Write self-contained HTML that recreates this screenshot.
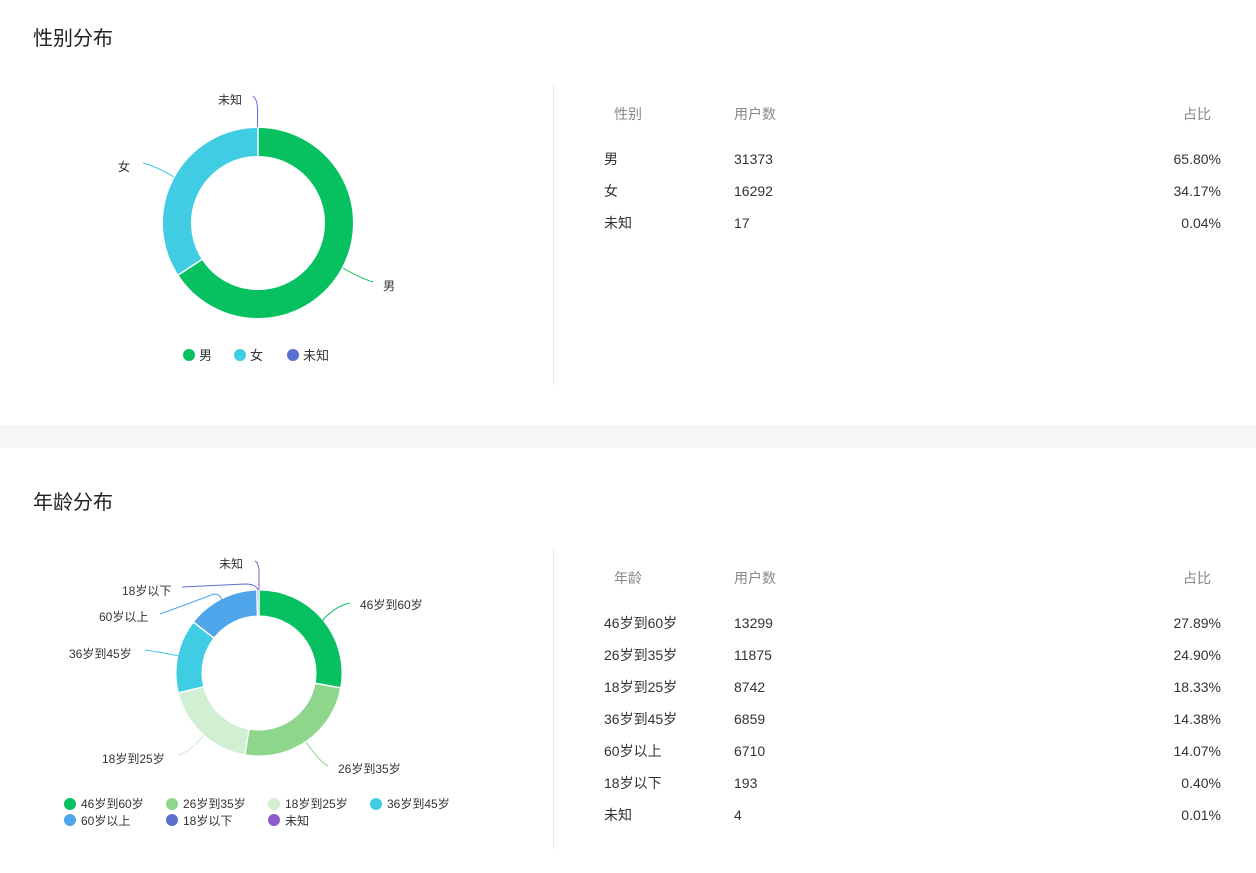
<!DOCTYPE html>
<html><head><meta charset="utf-8"><style>
body{margin:0;width:1256px;height:873px;background:#fff;font-family:"Liberation Sans","Noto Sans CJK SC",sans-serif;color:#333;position:relative;overflow:hidden}
.a{position:absolute;white-space:nowrap}
.t{font-size:20px;color:#222}
.h{font-size:14px;color:#888;line-height:20px}
.r{font-size:14px;color:#333;line-height:20px}
.rt{text-align:right;width:100px}
.vl{position:absolute;width:1px;background:#e8e8e8;left:553px}
</style></head><body>
<div class="a t" style="left:33px;top:22px">性别分布</div>
<div class="vl" style="top:85px;height:300px"></div>
<div style="position:absolute;left:0;top:425px;width:1256px;height:23px;background:#f5f6f7"></div>
<div class="a t" style="left:33px;top:486px">年龄分布</div>
<div class="vl" style="top:549px;height:300px"></div>

<svg class="a" style="left:0;top:0" width="553" height="873">
<g fill="none" stroke-width="28">
<path d="M258 142 A81 81 0 1 1 190.12 267.23" stroke="#07c160"/>
<path d="M190.12 267.23 A81 81 0 0 1 257.94 142" stroke="#40cde3"/>
</g>
<g stroke="#fff" stroke-width="1.5"><line x1="258" y1="156" x2="258" y2="127"/><line x1="202.7" y1="259" x2="177.6" y2="275.4"/></g>
<path d="M343 268 Q360 278 373 282" stroke="#07c160" fill="none"/>
<path d="M174 177 Q160 168 143 163" stroke="#40cde3" fill="none"/>
<path d="M257.5 127 L257.5 108 Q257 99 253 96" stroke="#5b6fd0" fill="none"/>
<text x="383" y="290" font-size="12" fill="#333">男</text>
<text x="118" y="171" font-size="12" fill="#333">女</text>
<text x="218" y="104" font-size="12" fill="#333">未知</text>
<circle cx="189" cy="355" r="6" fill="#07c160"/><text x="199" y="360" font-size="13" fill="#333">男</text>
<circle cx="240" cy="355" r="6" fill="#40cde3"/><text x="250" y="360" font-size="13" fill="#333">女</text>
<circle cx="293" cy="355" r="6" fill="#5b6fd0"/><text x="303" y="360" font-size="13" fill="#333">未知</text>

<g fill="none" stroke-width="25">
<path d="M259 603 A70 70 0 0 1 327.85 685.64" stroke="#07c160"/>
<path d="M327.85 685.64 A70 70 0 0 1 246.85 741.94" stroke="#8dd68c"/>
<path d="M246.85 741.94 A70 70 0 0 1 191.08 689.93" stroke="#d1efd3"/>
<path d="M191.08 689.93 A70 70 0 0 1 203.69 630.10" stroke="#40cde3"/>
<path d="M203.69 630.10 A70 70 0 0 1 257.11 603.03" stroke="#4ea5ea"/>
<path d="M257.11 603.03 A70 70 0 0 1 258.88 603" stroke="#5f6fcf"/>
</g>
<g stroke="#fff" stroke-width="1.5">
<line x1="259" y1="616" x2="259" y2="589"/>
<line x1="315.1" y1="683.3" x2="341.6" y2="688"/>
<line x1="249.1" y1="729.1" x2="244.6" y2="756"/>
<line x1="203.7" y1="686.8" x2="177.5" y2="693.1"/>
<line x1="214" y1="638.1" x2="193.4" y2="622.1"/>
<line x1="257.5" y1="616" x2="256.8" y2="589"/>
</g>
<path d="M322 621 Q335 606 350 603" stroke="#07c160" fill="none"/>
<path d="M306 742 Q320 762 328 766" stroke="#8dd68c" fill="none"/>
<path d="M204 735 Q190 752 178 755" stroke="#d1efd3" fill="none"/>
<path d="M179 656 Q160 652 145 650" stroke="#40cde3" fill="none"/>
<path d="M222 600 Q220 594 214 594 Q185 605 160 614" stroke="#4ea5ea" fill="none"/>
<path d="M258 590 Q256 584 245 584 L182 587" stroke="#5f6fcf" fill="none"/>
<path d="M259 590 L259 570 Q258 562 255 561" stroke="#8e5bd1" fill="none"/>
<text x="360" y="609" font-size="12" fill="#333">46岁到60岁</text>
<text x="338" y="773" font-size="12" fill="#333">26岁到35岁</text>
<text x="102" y="763" font-size="12" fill="#333">18岁到25岁</text>
<text x="69" y="658" font-size="12" fill="#333">36岁到45岁</text>
<text x="99" y="621" font-size="12" fill="#333">60岁以上</text>
<text x="122" y="595" font-size="12" fill="#333">18岁以下</text>
<text x="219" y="568" font-size="12" fill="#333">未知</text>
<g font-size="12" fill="#333">
<circle cx="70" cy="804" r="6" fill="#07c160"/><text x="81" y="808">46岁到60岁</text>
<circle cx="172" cy="804" r="6" fill="#8dd68c"/><text x="183" y="808">26岁到35岁</text>
<circle cx="274" cy="804" r="6" fill="#d1efd3"/><text x="285" y="808">18岁到25岁</text>
<circle cx="376" cy="804" r="6" fill="#40cde3"/><text x="387" y="808">36岁到45岁</text>
<circle cx="70" cy="820" r="6" fill="#4ea5ea"/><text x="81" y="825">60岁以上</text>
<circle cx="172" cy="820" r="6" fill="#5f6fcf"/><text x="183" y="825">18岁以下</text>
<circle cx="274" cy="820" r="6" fill="#8e5bd1"/><text x="285" y="825">未知</text>
</g>
</svg>

<div class="a h" style="left:614px;top:104px">性别</div>
<div class="a h" style="left:734px;top:104px">用户数</div>
<div class="a h rt" style="left:1111px;top:104px">占比</div>
<div class="a r" style="left:604px;top:149px">男</div><div class="a r" style="left:734px;top:149px">31373</div><div class="a r rt" style="left:1121px;top:149px">65.80%</div>
<div class="a r" style="left:604px;top:181px">女</div><div class="a r" style="left:734px;top:181px">16292</div><div class="a r rt" style="left:1121px;top:181px">34.17%</div>
<div class="a r" style="left:604px;top:213px">未知</div><div class="a r" style="left:734px;top:213px">17</div><div class="a r rt" style="left:1121px;top:213px">0.04%</div>

<div class="a h" style="left:614px;top:568px">年龄</div>
<div class="a h" style="left:734px;top:568px">用户数</div>
<div class="a h rt" style="left:1111px;top:568px">占比</div>
<div class="a r" style="left:604px;top:613px">46岁到60岁</div><div class="a r" style="left:734px;top:613px">13299</div><div class="a r rt" style="left:1121px;top:613px">27.89%</div>
<div class="a r" style="left:604px;top:645px">26岁到35岁</div><div class="a r" style="left:734px;top:645px">11875</div><div class="a r rt" style="left:1121px;top:645px">24.90%</div>
<div class="a r" style="left:604px;top:677px">18岁到25岁</div><div class="a r" style="left:734px;top:677px">8742</div><div class="a r rt" style="left:1121px;top:677px">18.33%</div>
<div class="a r" style="left:604px;top:709px">36岁到45岁</div><div class="a r" style="left:734px;top:709px">6859</div><div class="a r rt" style="left:1121px;top:709px">14.38%</div>
<div class="a r" style="left:604px;top:741px">60岁以上</div><div class="a r" style="left:734px;top:741px">6710</div><div class="a r rt" style="left:1121px;top:741px">14.07%</div>
<div class="a r" style="left:604px;top:773px">18岁以下</div><div class="a r" style="left:734px;top:773px">193</div><div class="a r rt" style="left:1121px;top:773px">0.40%</div>
<div class="a r" style="left:604px;top:805px">未知</div><div class="a r" style="left:734px;top:805px">4</div><div class="a r rt" style="left:1121px;top:805px">0.01%</div>
</body></html>
